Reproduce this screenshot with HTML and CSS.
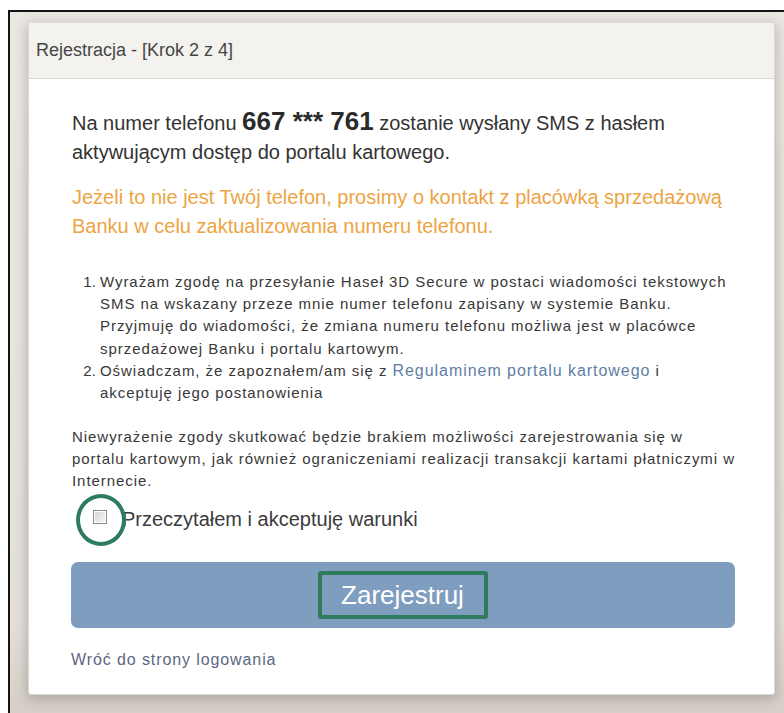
FILE: index.html
```html
<!DOCTYPE html>
<html lang="pl">
<head>
<meta charset="utf-8">
<title>Rejestracja - Krok 2 z 4</title>
<link rel="stylesheet" href="styles.css">
</head>
<body>
<div class="frame">
  <div class="card">
    <div class="card-header">Rejestracja - [Krok 2 z 4]</div>
    <div class="card-body">
      <p class="lead">Na numer telefonu <strong class="phone">667 *** 761</strong> zostanie wysłany SMS z hasłem aktywującym dostęp do portalu kartowego.</p>
      <p class="warning">Jeżeli to nie jest Twój telefon, prosimy o kontakt z placówką sprzedażową Banku w celu zaktualizowania numeru telefonu.</p>
      <ol class="terms">
        <li>Wyrażam zgodę na przesyłanie Haseł 3D Secure w postaci wiadomości tekstowych<br>SMS na wskazany przeze mnie numer telefonu zapisany w systemie Banku.<br>Przyjmuję do wiadomości, że zmiana numeru telefonu możliwa jest w placówce<br>sprzedażowej Banku i portalu kartowym.</li>
        <li>Oświadczam, że zapoznałem/am się z <a class="terms-link" href="#">Regulaminem portalu kartowego</a> i<br>akceptuję jego postanowienia</li>
      </ol>
      <p class="notice">Niewyrażenie zgody skutkować będzie brakiem możliwości zarejestrowania się w<br>portalu kartowym, jak również ograniczeniami realizacji transakcji kartami płatniczymi w<br>Internecie.</p>
      <label class="accept">
        <span class="check-wrap"><input type="checkbox" class="check"><span class="ring"></span></span>
        <span class="accept-text">Przeczytałem i akceptuję warunki</span>
      </label>
      <button class="submit" type="button"><span class="submit-label">Zarejestruj</span></button>
      <a class="back" href="#">Wróć do strony logowania</a>
    </div>
  </div>
</div>
</body>
</html>
```
FILE: styles.css
```css
html, body {
  margin: 0;
  padding: 0;
  background: #ffffff;
  overflow: hidden;
}

.frame {
  margin: 10px 0 0 8px;
  border-top: 2px solid #151515;
  border-left: 2px solid #151515;
  background: linear-gradient(#ebe8e4, #e4dfda 85%, #d3ccc5);
  padding: 10px 0 20px 18px;
  height: 720px;
  box-sizing: border-box;
}

.card {
  width: 747px;
  height: 673px;
  box-sizing: border-box;
  background: #ffffff;
  border: 1px solid #dcd9d5;
  border-radius: 3px;
  box-shadow: 0 3px 12px 2px rgba(90, 80, 70, 0.3);
  font-family: "Liberation Sans", Arial, sans-serif;
  color: #333333;
}

.card-header {
  height: 55px;
  display: flex;
  align-items: center;
  padding: 0 7px;
  background: #f4f2ef;
  border-bottom: 1px solid #dddad6;
  border-radius: 3px 3px 0 0;
  font-size: 18px;
  color: #454545;
}

.card-body {
  padding: 29px 30px 0 43px;
  display: flex;
  flex-direction: column;
}

.lead,
.warning {
  margin: 0;
  font-size: 20px;
  line-height: 29px;
}

.phone {
  font-size: 26px;
  line-height: 1;
  color: #2a2a2a;
}

.warning {
  margin-top: 16px;
  color: #eca444;
}

/* consent list and notice share the small copy style */
.terms,
.notice {
  font-size: 15px;
  letter-spacing: 0.95px;
  color: #383838;
  white-space: nowrap;
}

.terms {
  margin: 30px 0 0;
  padding-left: 28px;
  line-height: 22.2px;
}

.terms li::marker {
  letter-spacing: 0;
}

.terms-link {
  color: #5f7ea4;
  text-decoration: none;
  font-size: 16px;
}

.notice {
  margin: 22px 0 0;
  line-height: 22px;
}

.accept {
  display: flex;
  align-items: center;
  height: 24px;
  margin: 15px 0 0 21px;
  gap: 15px;
}

.check-wrap {
  position: relative;
  width: 14px;
  height: 14px;
  margin-bottom: 4px;
  display: block;
}

.check {
  appearance: none;
  -webkit-appearance: none;
  margin: 0;
  width: 14px;
  height: 14px;
  box-sizing: border-box;
  border: 1px solid #8a8a8a;
  background: linear-gradient(135deg, #d2d2d2, #f7f7f7);
  box-shadow: inset 0 0 0 1px #ffffff;
  display: block;
}

.ring {
  position: absolute;
  left: -17px;
  top: -16px;
  width: 50px;
  height: 52px;
  box-sizing: border-box;
  border: 4px solid #2f7b5d;
  border-radius: 50%;
}

.accept-text {
  font-size: 20px;
  color: #3b3b3b;
}

.submit {
  margin: 31px 0 0 -1px;
  height: 66px;
  width: 664px;
  border: none;
  border-radius: 7px;
  background: #7e9dbf;
  display: flex;
  align-items: center;
  justify-content: center;
  padding: 0;
  cursor: pointer;
}

.submit-label {
  font-family: "Liberation Sans", Arial, sans-serif;
  font-size: 26px;
  line-height: 30px;
  color: #ffffff;
  padding: 5px 20px 5px 19px;
  border: 4px solid #2f7b5d;
  border-radius: 3px;
}

.back {
  margin-top: 22px;
  font-size: 16px;
  line-height: 20px;
  letter-spacing: 0.9px;
  color: #5c677f;
  text-decoration: none;
  align-self: flex-start;
  margin-left: -1px;
}
```
